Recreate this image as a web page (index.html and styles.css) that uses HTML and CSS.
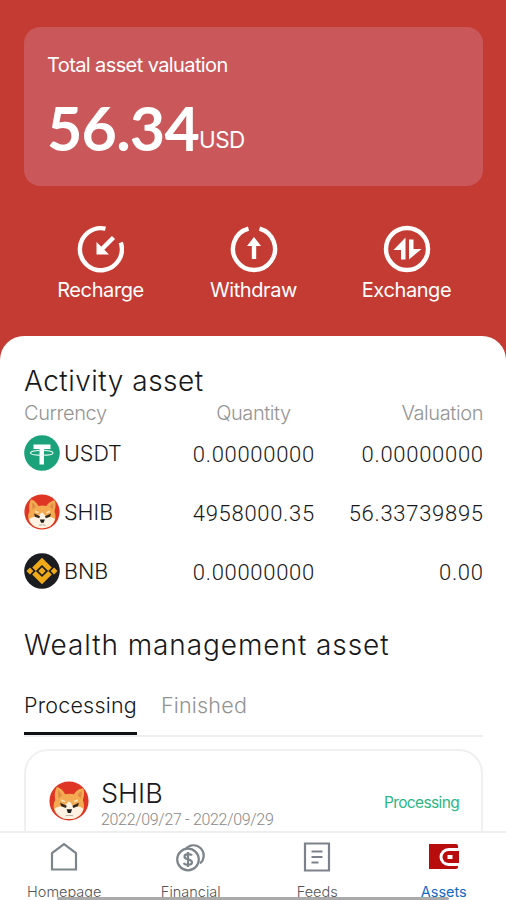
FILE: index.html
```html
<!DOCTYPE html>
<html lang="en">
<head>
<meta charset="utf-8">
<meta name="viewport" content="width=device-width, initial-scale=1">
<title>Assets</title>
<link rel="stylesheet" href="styles.css">
</head>
<body>
<svg class="defs" width="0" height="0" aria-hidden="true">
  <symbol id="shib" viewBox="0 0 36 36">
    <circle cx="18" cy="18" r="17.600" fill="#df3524"/>
    <path d="M7 5.500c3 .5 6 3.500 7.500 6.500 2.500-.8 5.500-.8 8 0C24 9 27.500 6.500 31 6.500c1 4 .5 7.500-.5 10.500 2 6 1 10-2.500 13.500-5 5-15 5-20 0C4 27 3 22 5.500 17 5 13 5 9 7 5.500z" fill="#f3aa50"/>
    <path d="M8 8.500c1.500.8 3 2.500 3.800 4.500l-3.300 2.500zM29.500 9c-1.500.6-3 2-3.800 4l3.300 2.500z" fill="#e08c45"/>
    <path d="M5 25c3-2.500 6-2 8.500-2.500 2-.5 3-4 4.500-4s2.500 3.500 4.500 4c2.500.5 5.500 0 8.500 2.500-.8 2.500-1.500 4-3 5.500-5 5-15 5-20 0-1.500-1.500-2.500-3-3-5.500z" fill="#fff2e2"/>
    <path d="M11 16.500l4 1.500-1 1.200-3-1zM26 16.500l-4 1.500 1 1.200 3-1z" fill="#fde3bd"/>
    <path d="M10 19.500l6 2.700-.8 2-4.200-1.400zM27 19.500l-6 2.700.8 2 4.200-1.400z" fill="#33261c"/>
    <path d="M15.800 25.500h5l-1.200 3.200h-2.600z" fill="#1d1d1f"/>
    <path d="M15 31.300q3.300-1 6.600 0" fill="none" stroke="#b9aea5"/>
  </symbol>
</svg>
<div class="app">
  <header class="hero">
    <section class="total">
      <div class="total-label">Total asset valuation</div>
      <div class="total-value"><span class="amount">56.34</span><span class="unit">USD</span></div>
    </section>
    <nav class="actions">
      <div class="action">
        <svg width="48" height="48" viewBox="0 0 48 48" fill="none" stroke="#fff" stroke-width="4.400"><path d="M29.500 3.700A21 21 0 1 0 44.800 17.500"/><path d="M37.500 12.500L26 24"/><path d="M20.500 17V29.500H33z" fill="#fff" stroke="none"/></svg>
        <span>Recharge</span>
      </div>
      <div class="action">
        <svg width="48" height="48" viewBox="0 0 48 48" fill="none" stroke="#fff" stroke-width="4.400"><path d="M18.500 3.700A21 21 0 1 0 29.500 3.700"/><path d="M24 34V18"/><path d="M24 12l7 9H17z" fill="#fff" stroke="none"/></svg>
        <span>Withdraw</span>
      </div>
      <div class="action">
        <svg width="48" height="48" viewBox="0 0 48 48"><circle cx="24" cy="24" r="21" fill="none" stroke="#fff" stroke-width="4.400"/><path d="M22.500 12.500v22h-4.500V25h-7.500zM26 34.500v-20h4.500V24h8z" fill="#fff"/></svg>
        <span>Exchange</span>
      </div>
    </nav>
  </header>
  <main class="sheet">
    <h2 class="title title-activity">Activity asset</h2>
    <div class="row head"><span>Currency</span><span>Quantity</span><span>Valuation</span></div>
    <div class="row">
      <div class="coin"><svg width="36" height="36" viewBox="0 0 36 36"><circle cx="18" cy="18" r="17.800" fill="#1ba27a"/><path d="M9.500 9.500h17V14H20v15.500h-4.500V14h-6z" fill="#fff"/><path d="M6.500 18c0-1.800 5-2.500 9-2.700M20 15.300c4 .2 9 .9 9 2.700 0 3-22.500 3-22.500 0" fill="none" stroke="#e4f6f0" stroke-width="1.200"/></svg><span>USDT</span></div>
      <span class="num">0.00000000</span><span class="num">0.00000000</span>
    </div>
    <div class="row">
      <div class="coin"><svg width="36" height="36"><use href="#shib"/></svg><span>SHIB</span></div>
      <span class="num">4958000.35</span><span class="num">56.33739895</span>
    </div>
    <div class="row">
      <div class="coin"><svg width="36" height="36" viewBox="0 0 36 36"><circle cx="18" cy="18" r="17.800" fill="#1b1c20"/><path transform="translate(18 18) scale(1.150) translate(-18 -18)" d="M9.500 15L18 6.500l8.500 8.500-3.100 3.100L18 12.700l-5.400 5.400zM9.500 21l3.100-3.100 5.400 5.400 5.400-5.400 3.100 3.100-8.500 8.500zM18 14.800l3.200 3.200-3.200 3.200-3.200-3.200zM7.500 15l3 3-3 3-3-3zM28.500 15l3 3-3 3-3-3z" fill="#f0aa18"/></svg><span>BNB</span></div>
      <span class="num">0.00000000</span><span class="num">0.00</span>
    </div>
    <h2 class="title title-wealth">Wealth management asset</h2>
    <div class="tabs"><span class="tab active">Processing</span><span class="tab">Finished</span></div>
    <article class="order">
      <svg width="40" height="40"><use href="#shib"/></svg>
      <div class="order-text"><div class="order-name">SHIB</div><div class="order-dates">2022/09/27 - 2022/09/29</div></div>
      <span class="status">Processing</span>
    </article>
  </main>
  <footer class="tabbar">
    <div class="item"><svg width="32" height="32" viewBox="0 0 32 32" fill="none" stroke="#7d858b" stroke-width="2.200"><path d="M4 28.500V12L16 3l12 9v16.500z"/></svg><span>Homepage</span></div>
    <div class="item"><svg width="32" height="32" viewBox="0 0 32 32" fill="none" stroke="#7d858b" stroke-width="2.200"><path d="M10.500 8A10.300 10.300 0 1 1 25 22.500"/><circle cx="13" cy="18.500" r="10.800"/><path d="M17 14.500c-1-1.700-7.500-2.300-7.500 1.200 0 3.300 7.500 2 7.500 5.500 0 3.400-7 3.200-8.300.8M13 11v15"/></svg><span>Financial</span></div>
    <div class="item"><svg width="32" height="32" viewBox="0 0 32 32" fill="none" stroke="#7c818c" stroke-width="2.200"><path d="M4 2.500h24v27H4z"/><path d="M10.500 10.500h11M10.500 16h11M10.500 21.500h7"/></svg><span>Feeds</span></div>
    <div class="item current"><svg width="32" height="32" viewBox="0 0 32 32"><path d="M1 3h27q2 0 2 2v2H20.500a9 9 0 0 0 0 18H30v1q0 2-2 2H1z" fill="#b90d0d"/><path d="M31 10v12H20.500a6 6 0 0 1 0-12z" fill="#b90d0d"/><path d="M19.500 14h5v4h-5z" fill="#fff"/></svg><span>Assets</span></div>
    <div class="home-line"></div>
  </footer>
</div>
</body>
</html>
```
FILE: styles.css
```css
* { box-sizing: border-box; }
body { margin: 0; font-family: Inter, "Liberation Sans", sans-serif; font-weight: 300; color: #17181a; background: #fff; }
.defs { position: absolute; }
.app { width: 506px; height: 900px; overflow: hidden; display: flex; flex-direction: column; background: #c33b33; }
.hero { height: 336px; flex: none; padding: 27px 23px 0 24px; color: #fff; }
.total { height: 159px; border-radius: 16px; background: #ca575a; padding: 25px 24px 0 23px; }
.total-label { font-size: 20px; line-height: 26px; font-weight: 400; letter-spacing: -.6px; }
.total-value { display: flex; align-items: baseline; height: 76px; line-height: 76px; margin-top: 12px; }
.amount { font-family: Lato, sans-serif; font-weight: 700; font-size: 61px; letter-spacing: -.8px; }
.unit { font-size: 22.500px; font-weight: 400; letter-spacing: -.6px; position: relative; top: -3px; }
.actions { display: grid; grid-template-columns: repeat(3, 153px); padding-top: 39px; }
.action { display: flex; flex-direction: column; align-items: center; font-size: 20px; line-height: 26px; font-weight: 400; letter-spacing: -.4px; }
.action span { margin-top: 4px; }
.action:first-child svg { margin-right: 2px; }
.sheet { height: 495px; flex: none; overflow: hidden; background: #fff; border-radius: 24px 24px 0 0; padding: 28px 23px 0 24px; }
.title { margin: 0; font-size: 28px; font-weight: 300; line-height: 34px; white-space: nowrap; }
.title-activity { letter-spacing: .5px; }
.title-wealth { margin-top: 28px; letter-spacing: .92px; }
.row { display: grid; grid-template-columns: 150px 1fr 150px; height: 59px; align-items: center; font-size: 21.500px; }
.row > :nth-child(2) { text-align: center; }
.row > :nth-child(3) { text-align: right; }
.row.head { height: 25px; padding-top: 3px; font-size: 20px; letter-spacing: -.4px; color: #949494; }
.coin { display: flex; align-items: center; gap: 4px; letter-spacing: 0; }
.coin span { padding-top: 1px; }
.num { font-family: Roboto, sans-serif; font-size: 22px; font-weight: 350; letter-spacing: .7px; margin-right: -.7px; padding-top: 3px; }
.tabs { display: flex; gap: 24px; height: 63px; margin-top: 12px; border-bottom: 2px solid #eee; }
.tab { height: 61px; line-height: 62px; font-size: 21.500px; letter-spacing: .2px; color: #929292; }
.tab.active { color: #17181a; border-bottom: 3px solid #101113; }
.order { display: flex; height: 130px; margin-top: 12px; border: 2px solid #f0f0f0; border-radius: 24px; padding: 28px 22px 0 23px; }
.order svg { margin-top: 2px; }
.order-text { margin-left: 12px; flex: 1; }
.order-name { font-size: 27px; line-height: 30px; letter-spacing: 0; }
.order-dates { font-family: Roboto, sans-serif; font-size: 16px; line-height: 22px; letter-spacing: -.32px; color: #888; }
.status { font-size: 15.500px; line-height: 48px; letter-spacing: -.65px; color: #2eb584; font-weight: 400; }
.tabbar { position: relative; flex: 1; display: grid; grid-template-columns: repeat(4, 126.500px); background: #fff; border-top: 2px solid #eee; overflow: hidden; }
.item { display: flex; flex-direction: column; align-items: center; padding: 8px 0 0 2px; font-size: 14.500px; line-height: 18px; color: #555; }
.item span { margin-top: 10px; }
.current { color: #116ac5; font-weight: 400; }
.home-line { position: absolute; left: 57px; right: 57px; top: 64px; height: 3px; border-radius: 2px; background: #aaa; }
```
